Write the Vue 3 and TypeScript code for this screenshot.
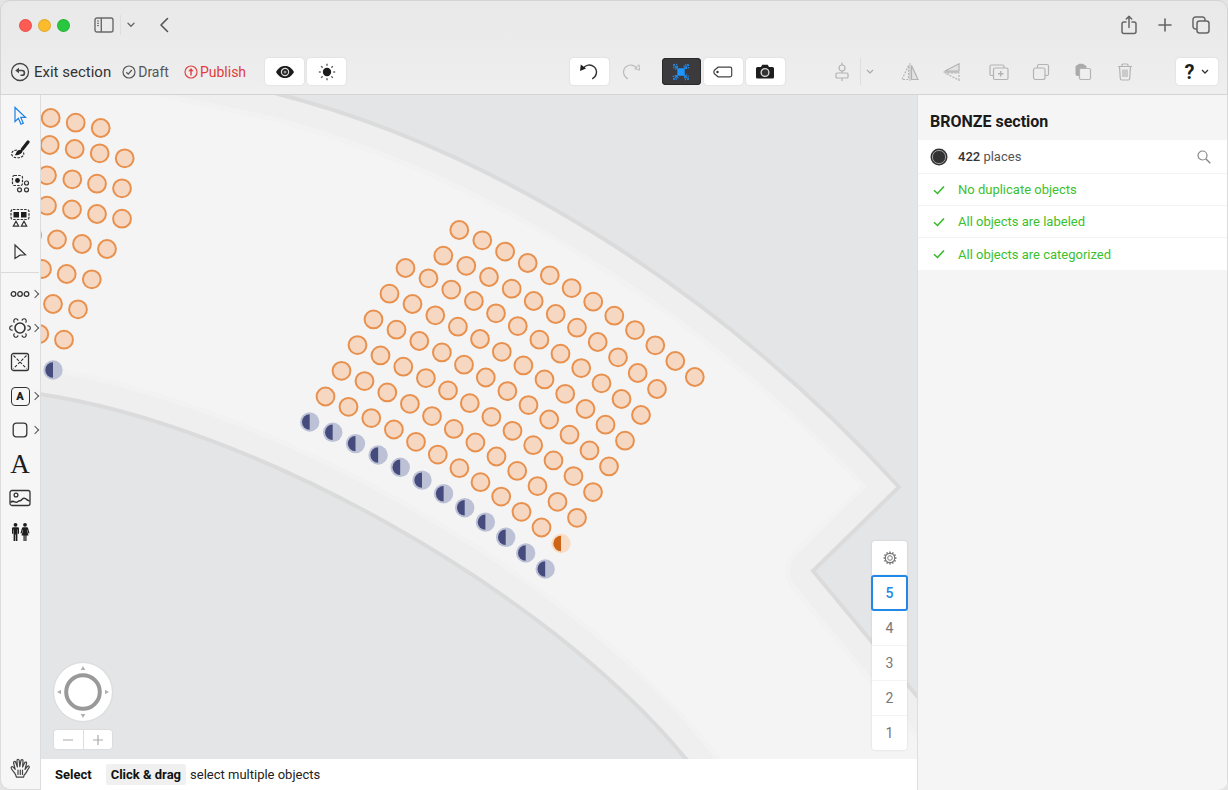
<script setup lang="ts">
import { ref } from 'vue'

interface Point {
  x: number
  y: number
}

interface Check {
  id: string
  label: string
}

/* Offsets of the twelve places of a curved row from its first place. */
const curve: Point[] = [
  { x: 0, y: 0 },
  { x: 23, y: 10.3 },
  { x: 45.8, y: 21.6 },
  { x: 68.4, y: 33 },
  { x: 90.5, y: 45.3 },
  { x: 112.3, y: 58.1 },
  { x: 133.9, y: 71.7 },
  { x: 155, y: 85.7 },
  { x: 175.7, y: 100.1 },
  { x: 196, y: 115.3 },
  { x: 216, y: 131 },
  { x: 235.5, y: 147 },
]

const rowAt = (x: number, y: number): Point[] => curve.map((p) => ({ x: x + p.x, y: y + p.y }))

const toPoints = (list: number[][]): Point[] => list.map(([x, y]) => ({ x, y }))

const secondRow = toPoints([
  [443.3, 255.7], [466.3, 265.8], [489, 277], [511.7, 288.7], [533.7, 301], [555.7, 314],
  [577, 327.7], [597.7, 342], [618, 357.3], [637.7, 373], [657, 389],
])

const leftBlock = toPoints([
  [50.7, 118], [75.7, 122.7], [100.7, 128],
  [49.7, 145], [74.7, 149], [99.7, 153.3], [124.7, 158.3],
  [47, 175.3], [72.3, 179.3], [97, 183.7], [122, 188.3],
  [47, 205.7], [72, 209.5], [97, 214], [122, 218.7],
  [32, 235.3], [57, 239.5], [82, 244], [107, 249],
  [42, 269], [66.7, 274], [91.8, 279.3],
  [53, 304], [78, 309.3],
  [39.3, 334], [64, 339.7],
])

const innerRows: Point[] = [0, 1, 2, 3, 4, 5].flatMap((k) => rowAt(405.5 - 16 * k, 268 + 25.7 * k))
const accessible: Point = innerRows[innerRows.length - 1]

const seats: Point[] = [...rowAt(459.3, 230), ...secondRow, ...innerRows.slice(0, -1), ...leftBlock]
const blueSeats: Point[] = [...rowAt(309.7, 422), { x: 53, y: 370 }]

const venue =
  'M-60 386 C-20 385 10 388 40 394 C250 425 545 588 686 759 L740 830 L1010 808 L813 571 L899 487 C713 284 484 146 274 93 L120 60 L-60 40 Z'

const checks: Check[] = [
  { id: 'dup', label: 'No duplicate objects' },
  { id: 'lab', label: 'All objects are labeled' },
  { id: 'cat', label: 'All objects are categorized' },
]

const floors: number[] = [5, 4, 3, 2, 1]
const floor = ref<number>(5)

const petals: number[] = [0, 60, 120, 180, 240, 300]
const rays: number[] = [0, 45, 90, 135, 180, 225, 270, 315]
const teeth: number[] = [0, 30, 60, 90, 120, 150, 180, 210, 240, 270, 300, 330]
</script>

<template>
  <div class="window">
    <header class="top">
      <div class="titlebar">
        <div class="lights">
          <span class="light red"></span>
          <span class="light amber"></span>
          <span class="light green"></span>
        </div>
        <button class="plain sidebar-toggle" aria-label="Toggle sidebar">
          <svg width="20" height="16" viewBox="0 0 20 16" fill="none" stroke="#6a6a6a" stroke-width="1.4">
            <rect x="1" y="1" width="18" height="14" rx="2" />
            <path d="M7.3 1v14" />
            <path d="M3 4h2M3 6.300h2M3 8.600h2" stroke-width="1" />
          </svg>
        </button>
        <button class="plain toggle-more" aria-label="Sidebar options">
          <svg width="8" height="6" viewBox="0 0 8 6" fill="none" stroke="#6a6a6a" stroke-width="1.4" stroke-linecap="round"><path d="M1 1.200l3 3 3-3" /></svg>
        </button>
        <button class="plain" aria-label="Back">
          <svg width="10" height="16" viewBox="0 0 10 16" fill="none" stroke="#555" stroke-width="1.600" stroke-linecap="round" stroke-linejoin="round"><path d="M8.500 1.500L2 8l6.500 6.500" /></svg>
        </button>
        <div class="browser-actions">
          <button class="plain" aria-label="Share">
            <svg width="18" height="20" viewBox="0 0 18 20" fill="none" stroke="#666" stroke-width="1.500" stroke-linecap="round" stroke-linejoin="round">
              <path d="M6 7H4a2 2 0 0 0-2 2v7.500a2 2 0 0 0 2 2h10a2 2 0 0 0 2-2V9a2 2 0 0 0-2-2h-2M9 12.500V1.500M6.300 4L9 1.400 11.700 4" />
            </svg>
          </button>
          <button class="plain" aria-label="New tab">
            <svg width="14" height="14" viewBox="0 0 14 14" stroke="#666" stroke-width="1.600" stroke-linecap="round"><path d="M7 1v12M1 7h12" /></svg>
          </button>
          <button class="plain" aria-label="Show tabs">
            <svg width="18" height="18" viewBox="0 0 18 18" fill="none" stroke="#666" stroke-width="1.500">
              <rect x="5" y="5" width="12" height="12" rx="2.500" />
              <path d="M5 13H3.500A2.500 2.500 0 0 1 1 10.500v-7A2.500 2.500 0 0 1 3.500 1h7A2.500 2.500 0 0 1 13 3.500V5" />
            </svg>
          </button>
        </div>
      </div>

      <div class="toolbar">
        <button class="plain exit">
          <svg width="20" height="20" viewBox="0 0 20 20" fill="none" stroke="#444" stroke-width="1.300">
            <circle cx="10" cy="10" r="8.500" />
            <path d="M7.500 8.500H12a2.200 2.200 0 0 1 0 4.800h-1.500" stroke-width="1.600" />
            <path d="M5.200 8.500L9 5.700v5.600z" fill="#444" stroke="none" />
          </svg>
          Exit section
        </button>
        <button class="plain state">
          <svg width="14" height="14" viewBox="0 0 14 14" fill="none" stroke="#555" stroke-width="1.200"><circle cx="7" cy="7" r="6" /><path d="M4.300 7.300l2 1.900 3.500-4.200" /></svg>
          Draft
        </button>
        <button class="plain state publish">
          <svg width="14" height="14" viewBox="0 0 14 14" fill="none" stroke="#e04444" stroke-width="1.200"><circle cx="7" cy="7" r="6" /><path d="M7 10.500V5" stroke-width="1.500" /><path d="M7 3l2.700 3.300H4.300z" fill="#e04444" stroke="none" /></svg>
          Publish
        </button>
        <div class="group">
          <button class="tile" aria-label="Preview">
            <svg width="20" height="14" viewBox="0 0 20 14"><path d="M1 7C3.500 2.600 6.500 1 10 1s6.500 1.600 9 6c-2.500 4.400-5.500 6-9 6S3.500 11.400 1 7z" fill="#1d1d1d" /><circle cx="10" cy="7" r="3.600" fill="none" stroke="#ddd" stroke-width="1.200" /><circle cx="10" cy="7" r="1.500" fill="#999" /></svg>
          </button>
          <button class="tile" aria-label="Brightness">
            <svg width="18" height="18" viewBox="-9 -9 18 18"><circle r="4.200" fill="#1d1d1d" /><path v-for="a in rays" :key="a" d="M0 -8.200v2" :transform="`rotate(${a})`" stroke="#444" stroke-width="1.200" /></svg>
          </button>
        </div>

        <span class="space-wide"></span>

        <div class="group">
          <button class="tile" aria-label="Undo">
            <svg width="20" height="18" viewBox="0 0 20 18" fill="none"><path d="M4 5.500C6.500 1.800 11.500.800 15 3.700c4 3.500 3 9.700-1.800 12.200" stroke="#333" stroke-width="1.400" /><path d="M1 8l.800-6.500L7 5.600z" fill="#1d1d1d" /></svg>
          </button>
          <button class="plain tool" aria-label="Redo" disabled>
            <svg width="20" height="18" viewBox="0 0 20 18" fill="none" stroke="#bcbcbc"><path d="M16 5.500C13.500 1.800 8.500.800 5 3.700c-4 3.500-3 9.700 1.800 12.200" stroke-width="1.200" /><path d="M18.600 7.200l-.600-5.500-4.300 4z" /></svg>
          </button>
        </div>
        <div class="group modes">
          <button class="tile active" aria-label="Show sections" aria-pressed="true">
            <svg width="18" height="18" viewBox="-9 -9 18 18"><rect x="-3.700" y="-3.700" width="7.400" height="7.400" rx="1.500" fill="#1e96ff" /><g fill="none" stroke="#2488e6" stroke-width="1.500"><path v-for="a in [0, 90, 180, 270]" :key="a" :transform="`rotate(${a})`" d="M-3 -3L-6 -6M-8 -6.800h1.500M-6.800 -8v1.300M-5 -7.600h1.200M-7.800 -4.600h1.200M-4.200 -5.500h1.300M2.500 -5.500h1.300" /></g></svg>
          </button>
          <button class="tile" aria-label="Labels">
            <svg width="20" height="12" viewBox="0 0 20 12" fill="none"><path d="M5 1.200h12.200a1.500 1.500 0 0 1 1.500 1.500v6.600a1.500 1.500 0 0 1-1.500 1.500H5L1.700 8a3 3 0 0 1 0-4z" stroke="#444" stroke-width="1.200" /><circle cx="4.500" cy="6" r="1.200" fill="#333" /></svg>
          </button>
          <button class="tile" aria-label="Snapshot">
            <svg width="20" height="16" viewBox="0 0 20 16"><path d="M1 4.500Q1 3 2.500 3H6l1.300-2.200h5.400L14 3h3.500Q19 3 19 4.500v8.700q0 1.300-1.500 1.300h-15Q1 14.500 1 13.200z" fill="#1d1d1d" /><circle cx="10" cy="8.500" r="3.900" fill="#333" stroke="#ddd" stroke-width="1.300" /></svg>
          </button>
        </div>

        <span class="space-narrow"></span>

        <div class="edit-tools">
          <button class="plain tool" aria-label="Align" disabled>
            <svg width="16" height="20" viewBox="0 0 16 20" fill="none" stroke="#b3b3b3" stroke-width="1.200"><circle cx="8" cy="6" r="3" /><rect x="2" y="11" width="12" height="5" rx="1" /><path d="M8 .500V3M8 9v2M8 16v3" /></svg>
          </button>
          <button class="plain more" aria-label="Align options" disabled>
            <svg width="8" height="6" viewBox="0 0 8 6" fill="none" stroke="#aaa" stroke-width="1.200"><path d="M1 1l3 3 3-3" /></svg>
          </button>
          <div class="group apart">
            <button class="plain tool" aria-label="Flip horizontally" disabled>
              <svg width="20" height="18" viewBox="0 0 20 18" fill="none" stroke="#b3b3b3" stroke-width="1.200"><path d="M11.500 2.500l6.500 14h-6.500z" fill="#e2e2e2" /><path d="M8.500 2.500l-6.500 14h6.500z" stroke-dasharray="2 1.300" /><path d="M10 0v18" stroke-width=".900" /></svg>
            </button>
            <button class="plain tool" aria-label="Flip vertically" disabled>
              <svg width="20" height="18" viewBox="0 0 20 18" fill="none" stroke="#b3b3b3" stroke-width="1.200"><path d="M17 .800v7.200H3z" fill="#e2e2e2" /><path d="M17 17.200V10H3z" stroke-dasharray="2 1.300" /><path d="M1.500 9H17" /></svg>
            </button>
          </div>
          <div class="group apart">
            <button class="plain tool" aria-label="Duplicate" disabled>
              <svg width="20" height="18" viewBox="0 0 20 18" fill="none" stroke="#b3b3b3" stroke-width="1.200"><path d="M4.500 12.500h-2A1.500 1.500 0 0 1 1 11V3.500A1.500 1.500 0 0 1 2.500 2h11A1.500 1.500 0 0 1 15 3.500V5" /><rect x="4.500" y="5" width="14.500" height="11.500" rx="1.500" /><path d="M11.700 8v5.500M9 10.700h5.500" stroke-width="1.500" /></svg>
            </button>
            <button class="plain tool" aria-label="Copy" disabled>
              <svg width="18" height="18" viewBox="0 0 18 18" fill="none" stroke="#b3b3b3" stroke-width="1.200"><rect x="1.500" y="5" width="11.500" height="11.500" rx="2" /><path d="M5.500 5V3a1.500 1.500 0 0 1 1.500-1.500h8A1.500 1.500 0 0 1 16.500 3v8a1.500 1.500 0 0 1-1.500 1.500h-2" /></svg>
            </button>
            <button class="plain tool" aria-label="Paste" disabled>
              <svg width="18" height="18" viewBox="0 0 18 18"><path d="M1.500 4a2 2 0 0 1 2-2L5 .800h4L10.500 2a2 2 0 0 1 2 2v9h-9a2 2 0 0 1-2-2z" fill="#aaa" /><rect x="5.500" y="5.500" width="11" height="11" rx="1.500" fill="#efefef" stroke="#b3b3b3" stroke-width="1.200" /></svg>
            </button>
            <button class="plain tool" aria-label="Delete" disabled>
              <svg width="16" height="18" viewBox="0 0 16 18" fill="none" stroke="#b3b3b3" stroke-width="1.200"><path d="M1 3.500h14M5 3.500V2a1 1 0 0 1 1-1h4a1 1 0 0 1 1 1v1.500M2.500 3.500l.800 12a1.500 1.500 0 0 0 1.500 1.500h6.400a1.500 1.500 0 0 0 1.500-1.500l.800-12" /><path d="M6 6.500v7.500M8 6.500v7.500M10 6.500v7.500" /></svg>
            </button>
          </div>
          <button class="tile help" aria-label="Help">
            <b>?</b>
            <svg width="8" height="6" viewBox="0 0 8 6" fill="none" stroke="#333" stroke-width="1.300"><path d="M1 1l3 3 3-3" /></svg>
          </button>
        </div>
      </div>
    </header>

    <div class="body">
      <nav class="rail" aria-label="Tools">
        <button class="rail-btn" aria-label="Select">
          <svg width="16" height="20" viewBox="0 0 16 20" fill="none" stroke="#1a80e6" stroke-width="1.200"><path d="M3 1.500v14l3.400-3.200 2.600 6 2.300-1-2.500-5.900h4.700z" /></svg>
        </button>
        <button class="rail-btn" aria-label="Brush select">
          <svg width="20" height="20" viewBox="0 0 20 20" fill="none"><path d="M18 2L12.500 9" stroke="#1d1d1d" stroke-width="3.200" stroke-linecap="round" /><path d="M12.700 10.700c-.700 3-3.700 4.800-8 4.500 1.800-1.300 1.200-3.200 3-4.600 1.800-1.300 4.300-1 5 .100z" fill="#1d1d1d" /><path d="M7 10C3.500 10 1.500 12 1.700 14.200c.200 4.600 11 4.800 12 .300.200-.900 0-1.600-.300-2" stroke="#333" stroke-width="1.200" stroke-dasharray="2.500 1.200" /></svg>
        </button>
        <button class="rail-btn" aria-label="Select similar">
          <svg width="20" height="20" viewBox="0 0 20 20" fill="none" stroke="#333" stroke-width="1.200"><rect x="2.500" y="1.500" width="10" height="10" rx="2" stroke-dasharray="2.500 1.200" /><circle cx="7.500" cy="6.500" r="2.400" fill="#1d1d1d" stroke="none" /><circle cx="16.500" cy="9" r="2" /><circle cx="9.500" cy="15.800" r="2" /><circle cx="16.500" cy="15.800" r="2" /></svg>
        </button>
        <button class="rail-btn" aria-label="Select by type">
          <svg width="20" height="20" viewBox="0 0 20 20" fill="none" stroke="#333" stroke-width="1.200"><rect x="1" y="1.500" width="18" height="10" rx="2" stroke-dasharray="2.500 1.200" /><path d="M3.500 4h5.500v5.500H3.500zM11 4h5.500v5.500H11z" fill="#1d1d1d" stroke="none" /><path d="M6 13.200l2.700 5H3.300zM14 13.200l2.700 5h-5.400z" /></svg>
        </button>
        <button class="rail-btn" aria-label="Node">
          <svg width="16" height="18" viewBox="0 0 16 18" fill="none" stroke="#333" stroke-width="1.200"><path d="M3 2l10.500 9.800-5.500.400L3 15.500z" /></svg>
        </button>
        <hr class="rail-rule" />
        <button class="rail-btn has-more" aria-label="Row">
          <svg width="20" height="10" viewBox="0 0 20 10" fill="none" stroke="#333" stroke-width="1.300"><circle cx="3.500" cy="5" r="2.300" /><circle cx="10" cy="5" r="2.300" /><circle cx="16.500" cy="5" r="2.300" /></svg>
        </button>
        <button class="rail-btn has-more" aria-label="Round table">
          <svg width="22" height="20" viewBox="-11 -10 22 20" fill="none" stroke="#333" stroke-width="1.200"><circle r="5" stroke-width="1.600" /><path v-for="a in petals" :key="a" :transform="`rotate(${a})`" d="M7.400 -2a2.150 2.150 0 1 1 0 4" /></svg>
        </button>
        <button class="rail-btn" aria-label="Booth">
          <svg width="20" height="20" viewBox="0 0 20 20" fill="none" stroke="#333" stroke-width="1.300"><rect x="1.500" y="1.500" width="17" height="17" rx="2" /><path d="M3.500 3.500l13 13M16.500 3.500l-13 13" stroke-dasharray="3 1.500" stroke-width="1.100" /></svg>
        </button>
        <button class="rail-btn has-more" aria-label="General admission">
          <span class="ga">A</span>
        </button>
        <button class="rail-btn has-more" aria-label="Rectangle">
          <svg width="16" height="16" viewBox="0 0 16 16" fill="none" stroke="#333" stroke-width="1.300"><rect x="1.200" y="1.200" width="13.600" height="13.600" rx="3" /></svg>
        </button>
        <button class="rail-btn letter" aria-label="Text">A</button>
        <button class="rail-btn" aria-label="Image">
          <svg width="22" height="18" viewBox="0 0 22 18" fill="none" stroke="#333" stroke-width="1.300"><rect x="1" y="1.500" width="20" height="15" rx="2" /><circle cx="7" cy="6" r="1.900" /><path d="M1.500 13.500c2-2.500 4-.500 5.500-.200 2 .300 2.200-2 4-1.500 1.500.300 1.700-2.300 4-2.500 2.500-.200 3.500 3.200 5.700 2.500" stroke-width="1.500" /></svg>
        </button>
        <button class="rail-btn" aria-label="Icon">
          <svg width="20" height="20" viewBox="0 0 20 20" fill="#1d1d1d"><circle cx="5.500" cy="2.800" r="1.900" /><path d="M3.200 5.200h4.600q1.200 0 1.200 1.300v5.300H7.800V7.500h-.400V19H5.800v-6.500h-.600V19H3.600V7.500h-.400v4.300H2V6.500q0-1.300 1.200-1.300z" /><circle cx="15" cy="2.800" r="1.900" /><path d="M13 5.200h4q.800 0 1.100 1l1.400 5-1.100.400-1.300-4-.200.300 1.600 5.600h-2V19h-1.200v-5.500h-.600V19h-1.200v-5.500h-2l1.600-5.600-.200-.300-1.300 4-1.100-.400 1.400-5q.300-1 1.100-1z" /></svg>
        </button>
        <button class="rail-btn hand" aria-label="Pan">
          <svg width="22" height="22" viewBox="0 0 22 22" fill="none" stroke="#444" stroke-width="1.200" stroke-linecap="round" stroke-linejoin="round"><path d="M6.500 17.500C5.500 15 2.800 13.500 2.200 11.200c-.300-1.400 1.100-2.100 2-1.100l2 2.300L4.600 6c-.300-1.600 1.600-2.200 2.100-.700L8.400 10 8 3.500c0-1.700 2-1.700 2.200 0l.600 6.200 1.100-6c.300-1.600 2.200-1.300 2.100.300L13.600 10l2-4.200c.700-1.400 2.400-.700 1.900.800L16 12.500c1-.700 1.300-2.300 2.600-3.300 1.200-.700 2.200.500 1.300 1.700-1.700 2.400-2.400 5.200-4.700 7.100l-.700 2.200H7.500z" /><path d="M9 13v4.500M11.300 13v4.500M13.500 13v4.500" /></svg>
        </button>
      </nav>

      <main class="stage">
        <div class="canvas">
          <svg class="plan" viewBox="41 95 877 664" preserveAspectRatio="xMinYMin slice" role="img" aria-label="Seating plan">
            <defs>
              <clipPath id="venue-clip"><path :d="venue" /></clipPath>
            </defs>
            <rect x="41" y="95" width="877" height="664" fill="#e3e5e6" />
            <path :d="venue" fill="#f4f4f4" />
            <g clip-path="url(#venue-clip)" fill="none" stroke-linejoin="round">
              <path :d="venue" stroke="#f2f2f2" stroke-width="56" />
              <path :d="venue" stroke="#efefef" stroke-width="46" />
            </g>
            <path :d="venue" fill="none" stroke="#dbdbdb" stroke-width="4" />
            <g fill="#f6d8c2" stroke="#e8914f" stroke-width="2">
              <circle v-for="(s, i) in seats" :key="i" :cx="s.x" :cy="s.y" r="8.900" />
            </g>
            <g v-for="(s, i) in blueSeats" :key="'b' + i" :transform="`translate(${s.x} ${s.y})`">
              <circle r="9.700" fill="#bcc1d6" />
              <path d="M0 -7.700a7.700 7.700 0 0 0 0 15.400z" fill="#454b7d" />
            </g>
            <g :transform="`translate(${accessible.x} ${accessible.y})`">
              <circle r="9.700" fill="#f8dcc6" />
              <path d="M0 -7.700a7.700 7.700 0 0 0 0 15.400z" fill="#cd6516" />
            </g>
          </svg>

          <div class="view-controls">
            <button class="compass" aria-label="Pan view">
              <svg width="58" height="58" viewBox="-29 -29 58 58"><circle r="16.800" fill="#fff" stroke="#999" stroke-width="4" /><path v-for="a in [0, 90, 180, 270]" :key="a" :transform="`rotate(${a})`" d="M0 -26l2.300 4h-4.600z" fill="#b0b0b0" /></svg>
            </button>
            <div class="zoom">
              <button class="zoom-btn" aria-label="Zoom out"><svg width="12" height="12" viewBox="0 0 12 12" stroke="#aaa" stroke-width="1.200"><path d="M1 6h10" /></svg></button>
              <button class="zoom-btn" aria-label="Zoom in"><svg width="12" height="12" viewBox="0 0 12 12" stroke="#aaa" stroke-width="1.200"><path d="M1 6h10M6 1v10" /></svg></button>
            </div>
          </div>

          <div class="floors">
            <button class="floor" aria-label="Floor settings">
              <svg width="14" height="14" viewBox="-7 -7 14 14" fill="none" stroke="#777"><circle r="4.700" stroke-width="1.200" /><circle r="2.300" stroke-width="1" /><path v-for="a in teeth" :key="a" :transform="`rotate(${a})`" d="M0 -4.800v-1.700" stroke-width="1.500" /></svg>
            </button>
            <button v-for="n in floors" :key="n" class="floor" :class="{ current: n === floor }" @click="floor = n">{{ n }}</button>
          </div>
        </div>

        <footer class="hints">
          <b>Select</b>
          <b class="chip">Click &amp; drag</b>
          <span>select multiple objects</span>
        </footer>
      </main>

      <aside class="panel">
        <h1>BRONZE section</h1>
        <ul class="rows">
          <li class="row">
            <svg class="mark" width="18" height="18" viewBox="0 0 18 18"><circle cx="9" cy="9" r="8.500" fill="#333" /><circle cx="9" cy="9" r="6.600" fill="none" stroke="#aaa" stroke-width=".900" /></svg>
            <span class="count"><span class="num">422</span> places</span>
            <button class="plain search" aria-label="Search">
              <svg width="14" height="14" viewBox="0 0 14 14" fill="none" stroke="#888" stroke-width="1.200"><circle cx="5.500" cy="5.500" r="4.500" /><path d="M8.800 8.800l4.500 4.500" stroke-width="1.500" /></svg>
            </button>
          </li>
          <li v-for="c in checks" :key="c.id" class="row ok">
            <svg class="mark" width="18" height="18" viewBox="0 0 18 18" fill="none" stroke="#32b824" stroke-width="1.500"><path d="M4 9.300l3.500 3.200L14 5.500" /></svg>
            {{ c.label }}
          </li>
        </ul>
      </aside>
    </div>
  </div>
</template>

<style>
html,
body {
  background: #e4e4e4;
}
</style>

<style scoped>
* {
  box-sizing: border-box;
}

.window {
  display: flex;
  flex-direction: column;
  min-height: 100vh;
  overflow: hidden;
  border-radius: 10px;
  background: #f5f5f5;
  box-shadow: inset 0 0 0 1px #d2d2d2;
  font-family: Roboto, "Liberation Sans", sans-serif;
  font-size: 13px;
  color: #333;
}

button {
  display: flex;
  align-items: center;
  justify-content: center;
  padding: 0;
  border: 0;
  background: none;
  font: inherit;
  color: inherit;
}

svg {
  display: block;
  flex: none;
}

.top {
  border: 1px solid #d4d4d4;
  border-radius: 10px 10px 0 0;
  background: linear-gradient(#e9e9e9, #ebebeb 50%, #efefef);
}

.titlebar {
  display: flex;
  align-items: center;
  height: 48px;
  padding: 0 17px 0 18px;
}

.lights {
  display: flex;
  gap: 6px;
  margin-right: 24px;
}

.light {
  width: 13px;
  height: 13px;
  border: 1px solid rgba(0, 0, 0, 0.1);
  border-radius: 50%;
}

.red { background: #fe5b54; }
.amber { background: #fbbb2d; }
.green { background: #28c73e; }

.toggle-more {
  height: 20px;
  margin: 0 24px 0 6px;
  padding-left: 6px;
  border-left: 1px solid #dedede;
}

.browser-actions {
  display: flex;
  align-items: center;
  gap: 20px;
  margin-left: auto;
}

.toolbar {
  display: flex;
  align-items: center;
  height: 45px;
  padding: 0 9px;
}

.exit {
  gap: 4px;
  font-size: 15px;
  color: #333;
}

.state {
  gap: 2px;
  margin-left: 11px;
  font-size: 14px;
  color: #555;
}

.publish {
  margin-left: 15px;
  color: #dd3d3d;
}

.group {
  display: flex;
  align-items: center;
  gap: 3px;
}

.state + .group {
  margin-left: 19px;
}

.tile {
  width: 39px;
  height: 27px;
  border-radius: 4px;
  background: #fff;
  box-shadow: 0 0 2px rgba(0, 0, 0, 0.12);
}

.tile.active {
  background: #3b3b3d;
  box-shadow: inset 0 0 0 1px #2a2a2a;
}

.modes {
  margin-left: 15px;
}

.space-wide { flex: 222; }
.space-narrow { flex: 42; }

.edit-tools {
  display: flex;
  align-items: center;
}

.tool {
  width: 30px;
  height: 27px;
}

.group .tool + .tool {
  margin-left: 9px;
}

.group .tile + .tool {
  margin-left: 3px;
  width: 32px;
}

.more {
  width: 18px;
  height: 27px;
  margin-left: 3px;
  border-left: 1px solid #dedede;
}

.apart {
  margin-left: 17px;
}

.help {
  gap: 7px;
  width: 42px;
  margin-left: 36px;
  color: #1d1d1d;
}

.help b {
  font-size: 20px;
}

.body {
  display: flex;
  flex: 1;
}

.rail {
  display: flex;
  flex-direction: column;
  width: 41px;
  padding: 4px 1px 4px 0;
  border: 1px solid #dcdcdc;
  border-top: 0;
  border-bottom-left-radius: 10px;
  background: #f6f6f6;
}

.rail-btn {
  position: relative;
  height: 34px;
}

.has-more::after {
  content: "";
  position: absolute;
  top: 14px;
  right: 1px;
  width: 5px;
  height: 5px;
  border: solid #555;
  border-width: 1px 1px 0 0;
  transform: rotate(45deg);
}

.rail-rule {
  width: 100%;
  height: 1px;
  margin: 3px 0 4px;
  border: 0;
  background: #dadada;
}

.ga {
  display: grid;
  place-items: center;
  width: 19px;
  height: 19px;
  border: 1px solid #333;
  border-radius: 4px;
  font-size: 11px;
  font-weight: 900;
  color: #1d1d1d;
}

.letter {
  font-family: "Liberation Serif", serif;
  font-size: 27px;
  color: #1d1d1d;
}

.hand {
  margin-top: auto;
}

.stage {
  display: flex;
  flex: 1;
  flex-direction: column;
  min-width: 0;
}

.canvas {
  position: relative;
  flex: 1;
  min-height: 0;
  background: #e3e5e6;
}

.plan {
  position: absolute;
  inset: 0;
  width: 100%;
  height: 100%;
}

.view-controls {
  position: absolute;
  bottom: 10px;
  left: 13px;
}

.compass {
  width: 58px;
  height: 58px;
  border-radius: 50%;
  background: #fff;
  box-shadow: 0 0 2px rgba(0, 0, 0, 0.15);
}

.zoom {
  display: flex;
  gap: 1px;
  margin-top: 9px;
  border-radius: 3px;
  background: #ddd;
  box-shadow: 0 0 2px rgba(0, 0, 0, 0.12);
  overflow: hidden;
}

.zoom-btn {
  flex: 1;
  height: 19px;
  background: #fff;
}

.floors {
  position: absolute;
  right: 10px;
  bottom: 9px;
  width: 35px;
  border-radius: 3px;
  background: #fff;
  box-shadow: 0 0 2px rgba(0, 0, 0, 0.15);
}

.floor {
  width: 35px;
  height: 35px;
  border-bottom: 1px solid #f4f4f4;
  font-size: 14px;
  color: #777;
}

.floor:first-child {
  height: 34px;
}

.floor:last-child {
  height: 34px;
  border-bottom: 0;
}

.floor.current {
  width: 37px;
  height: 36px;
  margin: 0 -1px;
  border: 2px solid #2288e8;
  border-radius: 3px;
  font-weight: 500;
  color: #2288e8;
}

.hints {
  display: flex;
  align-items: center;
  height: 31px;
  padding-left: 14px;
  background: #fff;
  color: #222;
}

.hints b {
  font-weight: 700;
  color: #111;
}

.hints .chip {
  margin: 0 4px 0 14px;
  padding: 0 5px;
  border-radius: 2px;
  background: #f0f0f0;
  line-height: 21px;
}

.panel {
  width: 311px;
  border-right: 1px solid #dcdcdc;
  border-left: 1px solid #dedede;
  background: #f5f5f5;
}

.panel h1 {
  margin: 0;
  padding: 17px 12px 8px;
  font-size: 16px;
  font-weight: 700;
  line-height: 20px;
  color: #1a1a1a;
}

.rows {
  margin: 0;
  padding: 0;
  list-style: none;
  background: #fff;
}

.row {
  display: flex;
  align-items: center;
  gap: 10px;
  height: 32px;
  padding: 0 16px 0 12px;
  border-bottom: 1px solid #f4f4f4;
}

.row:first-child {
  height: 34px;
}

.row:last-child {
  border-bottom: 0;
}

.count {
  color: #555;
}

.num {
  color: #333;
  font-weight: 500;
}

.search {
  margin-left: auto;
}

.ok {
  color: #3cc02e;
}
</style>
